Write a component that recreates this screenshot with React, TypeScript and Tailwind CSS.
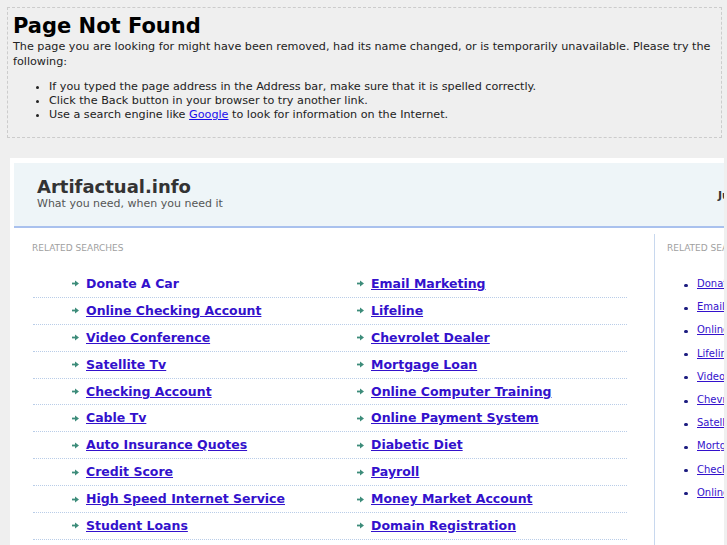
const leftLinks = [
  "Donate A Car",
  "Online Checking Account",
  "Video Conference",
  "Satellite Tv",
  "Checking Account",
  "Cable Tv",
  "Auto Insurance Quotes",
  "Credit Score",
  "High Speed Internet Service",
  "Student Loans",
];

const rightLinks = [
  "Email Marketing",
  "Lifeline",
  "Chevrolet Dealer",
  "Mortgage Loan",
  "Online Computer Training",
  "Online Payment System",
  "Diabetic Diet",
  "Payroll",
  "Money Market Account",
  "Domain Registration",
];

const sideLinks = [
  "Donate A Car",
  "Email Marketing",
  "Online Checking Account",
  "Lifeline",
  "Video Conference",
  "Chevrolet Dealer",
  "Satellite Tv",
  "Mortgage Loan",
  "Checking Account",
  "Online Computer Training",
];

function Arrow() {
  return (
    <svg width="7" height="7" viewBox="0 0 7 7" className="mr-[7px] shrink-0" aria-hidden>
      <rect x="0" y="2.6" width="4" height="1.8" fill="#3d8c7a" />
      <polygon points="3,0.6 7,3.5 3,6.4" fill="#3d8c7a" />
    </svg>
  );
}

function LinkCell({ label, plain }: { label: string; plain?: boolean }) {
  return (
    <div className="flex w-[285px] items-center pl-[39px]">
      <Arrow />
      <a
        href="#"
        className={`text-[12.5px] font-bold leading-[16px] text-[#3311cc] ${plain ? "no-underline" : "underline"}`}
      >
        {label}
      </a>
    </div>
  );
}

export default function App() {
  return (
    <div className="min-h-screen overflow-hidden bg-[#efefef] pt-[7px] font-['DejaVu_Sans',sans-serif] text-[#222]">
      {/* error notice */}
      <div className="ml-[7px] w-[715px] border border-dashed border-[#cccccc] px-[5px] pb-[15px] pt-[6px]">
        <h1 className="text-[21px] font-bold leading-[24px] text-black">Page Not Found</h1>
        <p className="mt-px text-[11.2px] leading-[15px]">
          The page you are looking for might have been removed, had its name changed, or is temporarily
          unavailable. Please try the following:
        </p>
        <ul className="mt-[11px] list-disc pl-[36px] text-[11.2px] leading-[14px]">
          <li>If you typed the page address in the Address bar, make sure that it is spelled correctly.</li>
          <li>Click the Back button in your browser to try another link.</li>
          <li>
            Use a search engine like{" "}
            <a href="#" className="text-[#1a0dee] underline">
              Google
            </a>{" "}
            to look for information on the Internet.
          </li>
        </ul>
      </div>

      {/* parked domain page */}
      <div className="ml-[10px] mt-[20px] h-[400px] w-[714px] overflow-hidden bg-white px-[4px] pt-[5px]">
        <div className="w-[1000px]">
          <div className="flex border-b-2 border-[#a9c1ee] bg-[#eef5f8] pb-[16px] pt-[13px]">
            <div className="w-[704px] pl-[23px]">
              <div className="text-[18px] font-bold leading-[21px] text-[#333]">Artifactual.info</div>
              <div className="text-[11px] leading-[13px] text-[#555]">What you need, when you need it</div>
            </div>
            <div className="pt-[13px] text-[11px] font-bold leading-[13px] text-[#333]">Just browsing?</div>
          </div>

          <div className="mt-[6px] flex">
            <div className="w-[640px] pt-[9px]">
              <div className="ml-[18px] text-[9px] uppercase leading-[11px] text-[#a0a0a0]">Related Searches</div>
              <div className="ml-[19px] mt-[17px] w-[594px]">
                {leftLinks.map((l, i) => (
                  <div
                    key={l}
                    className="flex h-[26.9px] border-b border-dotted border-[#b9cde8]"
                  >
                    <LinkCell label={l} plain={i === 0} />
                    <LinkCell label={rightLinks[i]} />
                  </div>
                ))}
              </div>
            </div>

            <div className="min-h-[320px] w-[300px] border-l border-[#c8d8ee] pl-[12px] pt-[9px]">
              <div className="text-[9px] uppercase leading-[11px] text-[#a0a0a0]">Related Searches</div>
              <ul className="mt-[18px] pl-[17px]">
                {sideLinks.map((l) => (
                  <li key={l} className="flex items-center text-[10px] leading-[23.2px]">
                    <span className="mr-[9px] mt-[3px] inline-block h-[3px] w-[4px] rounded-full bg-[#1c1c80]" />
                    <a href="#" className="text-[#3311cc] underline">
                      {l}
                    </a>
                  </li>
                ))}
              </ul>
            </div>
          </div>
        </div>
      </div>
    </div>
  );
}
